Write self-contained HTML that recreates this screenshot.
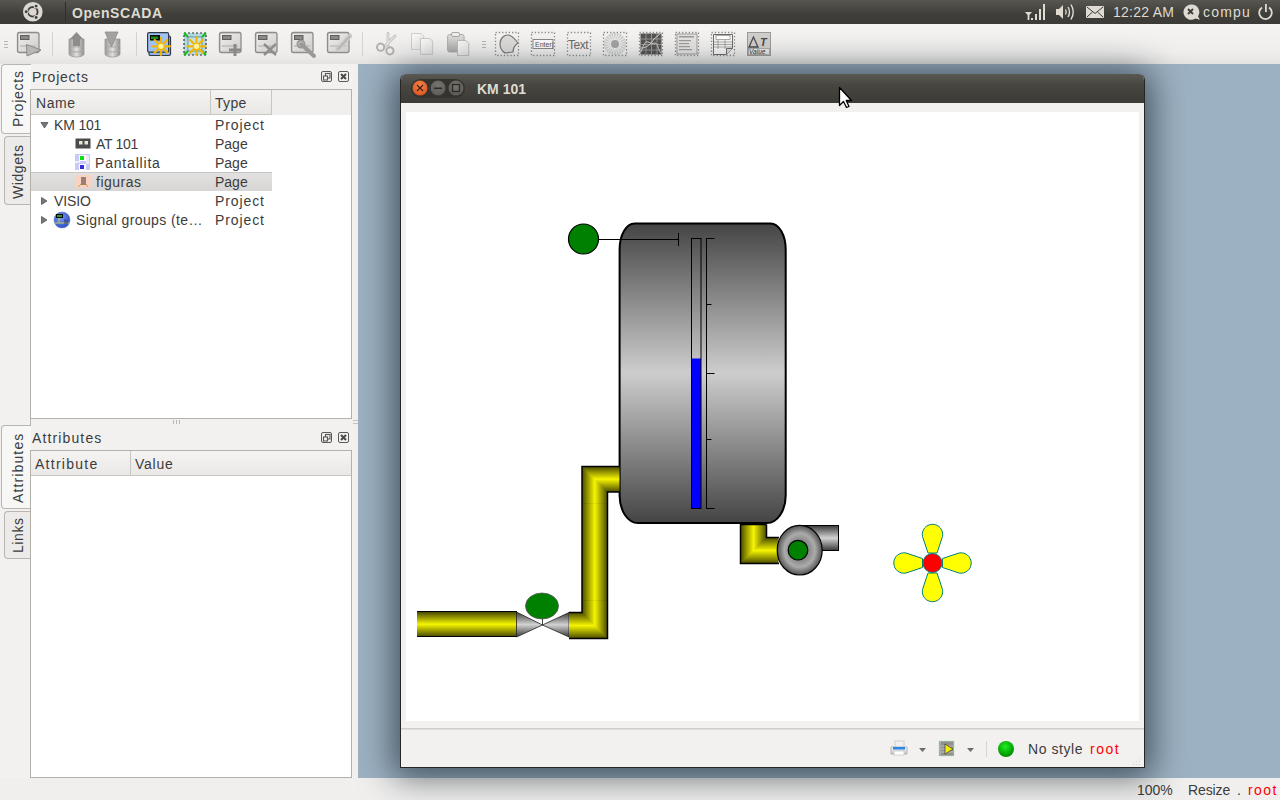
<!DOCTYPE html>
<html><head><meta charset="utf-8">
<style>
*{margin:0;padding:0;box-sizing:border-box}
html,body{width:1280px;height:800px;overflow:hidden;background:#f2f1f0;font-family:"Liberation Sans",sans-serif;font-size:14px;color:#3c3c3c}
.a{position:absolute}
#panel{left:0;top:0;width:1280px;height:24px;background:linear-gradient(#57564f,#3f3e3a 60%,#3c3b37)}
#toolbar{left:0;top:24px;width:1280px;height:40px;background:linear-gradient(#f5f4f3,#efeeed 70%,#e4e3e1)}
#mdi{left:358px;top:64px;width:922px;height:714px;background:#9cb1c2}
#status{left:0;top:778px;width:1280px;height:22px;background:#f0efee}
.tab{background:#ecebea;border:1px solid #b9b6b1;border-right:none;border-radius:4px 0 0 4px}
.tab.sel{background:#f7f7f6}
.vt{position:absolute;transform:rotate(-90deg);transform-origin:0 0;white-space:nowrap;color:#3c3c3c;letter-spacing:0.5px}
.tree{background:#fff;border:1px solid #b4b1ab}
.hdr{background:linear-gradient(#f5f4f3,#e9e8e6);border-bottom:1px solid #c9c6c1}
.t{position:absolute;white-space:nowrap}
</style></head><body>
<div id="panel" class="a">
<svg class="a" style="left:0;top:0" width="1280" height="24">
 <circle cx="32.8" cy="11.8" r="9.8" fill="#dcd8d1"/>
 <circle cx="32.8" cy="11.8" r="4.8" fill="none" stroke="#3f3e3a" stroke-width="1.9"/>
 <circle cx="26.20" cy="11.80" r="2.5" fill="#dcd8d1"/><circle cx="26.20" cy="11.80" r="1.45" fill="#3f3e3a"/>
 <circle cx="36.10" cy="6.08" r="2.5" fill="#dcd8d1"/><circle cx="36.10" cy="6.08" r="1.45" fill="#3f3e3a"/>
 <circle cx="36.10" cy="17.52" r="2.5" fill="#dcd8d1"/><circle cx="36.10" cy="17.52" r="1.45" fill="#3f3e3a"/>
 <rect x="65" y="2" width="1" height="20" fill="#2e2d2a"/>
 <g fill="#dfdbd2">
  <path d="M1025 12h7l-2.6 3v5h-1.8v-5z"/><rect x="1031" y="18" width="2" height="2"/>
  <rect x="1035" y="14" width="2" height="6"/><rect x="1039" y="9" width="2" height="11"/><rect x="1043" y="4" width="2" height="16"/>
  <path d="M1056 9h3l4-4v14l-4-4h-3z"/>
 </g>
 <g fill="none" stroke="#dfdbd2" stroke-width="1.4">
  <path d="M1065.5 9.5q1.5 2.5 0 5"/><path d="M1068 7q3 5 0 10"/><path d="M1071 4.5q4.5 7.5 0 15"/>
 </g>
 <rect x="1086" y="6" width="18" height="12" rx="1" fill="#dfdbd2"/>
 <path d="M1087 7l8 6.5 8-6.5M1087 17l5.5-5M1103 17l-5.5-5" fill="none" stroke="#3c3b37" stroke-width="1"/>
 <path d="M1191 4.6a7.6 7.6 0 1 0 4.5 13.8l4.5 1.4-2-3.4a7.6 7.6 0 0 0-7-11.8z" fill="#dfdbd2"/>
 <path d="M1188 9l5 5M1193 9l-5 5" stroke="#3c3b37" stroke-width="1.8"/>
 <path d="M1262 7.5a6.3 6.3 0 1 0 7 0" fill="none" stroke="#dfdbd2" stroke-width="1.8"/>
 <rect x="1265" y="4" width="1.8" height="8" fill="#dfdbd2"/>
</svg>
<div class="t" style="left:72px;top:4.5px;font-weight:bold;color:#dfdbd2;font-size:14px;letter-spacing:0.57px">OpenSCADA</div>
<div class="t" style="left:1113px;top:4px;color:#dfdbd2;font-size:14px;letter-spacing:0.25px">12:22 AM</div>
<div class="t" style="left:1203px;top:4px;color:#dfdbd2;font-size:14px;letter-spacing:1.19px">compu</div>
</div>
<div id="toolbar" class="a"><svg class="a" style="left:0;top:0" width="1280" height="40" viewBox="0 24 1280 40">
<defs>
 <linearGradient id="scrg" x1="0" y1="0" x2="1" y2="1"><stop offset="0" stop-color="#eeedeb"/><stop offset="1" stop-color="#cfcecc"/></linearGradient>
 <linearGradient id="dbg" x1="0" x2="1"><stop offset="0" stop-color="#9a9997"/><stop offset="0.5" stop-color="#e0dfdd"/><stop offset="1" stop-color="#8f8e8c"/></linearGradient>
 <radialGradient id="star" cx="0.5" cy="0.5" r="0.5"><stop offset="0" stop-color="#fff7a0"/><stop offset="1" stop-color="#f0a800"/></radialGradient>
</defs>
<g fill="#b5b4b2"><rect x="4" y="41" width="4" height="1"/><rect x="4" y="44" width="4" height="1"/><rect x="4" y="47" width="4" height="1"/>
<rect x="482" y="41" width="4" height="1"/><rect x="482" y="44" width="4" height="1"/><rect x="482" y="47" width="4" height="1"/></g>
<rect x="52" y="32" width="1" height="24" fill="#d3d2d0"/>
<rect x="136" y="32" width="1" height="24" fill="#d3d2d0"/>
<rect x="362" y="32" width="1" height="24" fill="#d3d2d0"/>
<g transform="translate(17,32)">
 <rect x="0.5" y="0.5" width="21.5" height="20" rx="2" fill="#d9d8d6" stroke="#8e8d8b" stroke-width="1.3"/>
 <rect x="2" y="2" width="19" height="17" fill="url(#scrg)"/>
 <rect x="3" y="3" width="9.5" height="5" fill="#5e5d5b"/>
 <rect x="4" y="4" width="7.5" height="3" fill="#8a8988"/>
 <path d="M3 14h16" stroke="#bdbcba" stroke-width="1.5"/>
</g>
<path d="M26.5 44.5L41 50L27 56z" fill="#b8b7b5" stroke="#8a8988" stroke-width="1"/>
<!-- db up -->
<g transform="translate(68,32)">
 <path d="M1 7v15a7.5 3 0 0 0 15 0v-15z" fill="url(#dbg)" stroke="#9a9997" stroke-width="0.8"/>
 <path d="M1 12a7.5 3 0 0 0 15 0M1 17a7.5 3 0 0 0 15 0" fill="none" stroke="#a8a7a5" stroke-width="1"/>
 <path d="M8.5 0L15 7h-3v7h-7v-7h-3z" fill="#8e8d8b"/>
</g>
<g transform="translate(104,32)">
 <path d="M1 7v15a7.5 3 0 0 0 15 0v-15z" fill="url(#dbg)" stroke="#9a9997" stroke-width="0.8"/>
 <path d="M1 12a7.5 3 0 0 0 15 0M1 17a7.5 3 0 0 0 15 0" fill="none" stroke="#a8a7a5" stroke-width="1"/>
 <path d="M1 0h13l-6.5 15z" fill="#a3a2a0" stroke="#8e8d8b" stroke-width="0.8"/>
</g>
<!-- new visual item: blue -->
<g transform="translate(147,32)">
 <rect x="2" y="4" width="21.5" height="19.5" rx="1.5" fill="#8fb5ea" stroke="#2f3a48" stroke-width="1.2"/>
 <rect x="0.6" y="0.6" width="21" height="19.6" rx="1.5" fill="#9ec2f4" stroke="#2f3a48" stroke-width="1.2"/>
 <rect x="3" y="3" width="10" height="5.5" fill="#061006"/>
 <rect x="4" y="4.5" width="7" height="2.5" fill="#1c8f1c"/>
 <g stroke="#f2b600" stroke-width="2.2" stroke-linecap="round"><path d="M14 5.5v17.5M5 14.3h18M7.7 8l12.6 12.6M7.7 20.6L20.3 8"/></g>
 <circle cx="14" cy="14.3" r="2.6" fill="#fff4a0"/>
</g>
<g transform="translate(183,32)">
 <rect x="1" y="1" width="22" height="22" fill="#b3d8de" stroke="#303030" stroke-width="1.2" stroke-dasharray="2 2"/>
 <path d="M1 1l4 4M23 1l-4 4M1 23l4-4M23 23l-4-4" stroke="#10c010" stroke-width="2"/>
 <rect x="5" y="5" width="14" height="14" fill="#c5e4e8" stroke="#587f86" stroke-width="0.8"/>
 <g stroke="#f2b600" stroke-width="2.2" stroke-linecap="round"><path d="M13.5 5.5v17.5M4.5 14.3h18M7.2 8l12.6 12.6M7.2 20.6L19.8 8"/></g>
 <circle cx="13.5" cy="14.3" r="2.6" fill="#fff4a0"/>
</g>
<g transform="translate(219,32)">
 <rect x="0.5" y="0.5" width="21.5" height="20" rx="2" fill="#d9d8d6" stroke="#8e8d8b" stroke-width="1.3"/>
 <rect x="2" y="2" width="19" height="17" fill="url(#scrg)"/>
 <rect x="3" y="3" width="9.5" height="5" fill="#5e5d5b"/>
 <rect x="4" y="4" width="7.5" height="3" fill="#8a8988"/>
 <path d="M3 14h16" stroke="#bdbcba" stroke-width="1.5"/>
</g>
<path d="M235 44v12M229 50h12" stroke="#8a8988" stroke-width="3"/>
<g transform="translate(255,32)">
 <rect x="0.5" y="0.5" width="21.5" height="20" rx="2" fill="#d9d8d6" stroke="#8e8d8b" stroke-width="1.3"/>
 <rect x="2" y="2" width="19" height="17" fill="url(#scrg)"/>
 <rect x="3" y="3" width="9.5" height="5" fill="#5e5d5b"/>
 <rect x="4" y="4" width="7.5" height="3" fill="#8a8988"/>
 <path d="M3 14h16" stroke="#bdbcba" stroke-width="1.5"/>
</g>
<path d="M264 55l12-11M264 44l12 11" stroke="#8e8d8b" stroke-width="2.4"/>
<g transform="translate(291,32)">
 <rect x="0.5" y="0.5" width="21.5" height="20" rx="2" fill="#d9d8d6" stroke="#8e8d8b" stroke-width="1.3"/>
 <rect x="2" y="2" width="19" height="17" fill="url(#scrg)"/>
 <rect x="3" y="3" width="9.5" height="5" fill="#5e5d5b"/>
 <rect x="4" y="4" width="7.5" height="3" fill="#8a8988"/>
 <path d="M3 14h16" stroke="#bdbcba" stroke-width="1.5"/>
</g>
<path d="M301 44l13 12" stroke="#999896" stroke-width="4" stroke-linecap="round"/>
<circle cx="301" cy="44" r="3.5" fill="none" stroke="#999896" stroke-width="2"/>
<g transform="translate(327,32)">
 <rect x="0.5" y="0.5" width="21.5" height="20" rx="2" fill="#d9d8d6" stroke="#8e8d8b" stroke-width="1.3"/>
 <rect x="2" y="2" width="19" height="17" fill="url(#scrg)"/>
 <rect x="3" y="3" width="9.5" height="5" fill="#5e5d5b"/>
 <rect x="4" y="4" width="7.5" height="3" fill="#8a8988"/>
 <path d="M3 14h16" stroke="#bdbcba" stroke-width="1.5"/>
</g>
<path d="M338 49l12-13" stroke="#c8c7c5" stroke-width="4.5" stroke-linecap="round"/>
<path d="M338 49l12-13" stroke="#a3a2a0" stroke-width="1" />
<!-- scissors -->
<defs><linearGradient id="pg" x1="0" y1="0" x2="1" y2="1"><stop offset="0" stop-color="#fbfbfa"/><stop offset="1" stop-color="#e2e1df"/></linearGradient>
<linearGradient id="clipg" x1="0" y1="0" x2="0" y2="1"><stop offset="0" stop-color="#e2e1df"/><stop offset="1" stop-color="#a9a8a6"/></linearGradient></defs>
<g fill="none" stroke-linecap="round">
 <path d="M388 33.5V45M395 36L385.5 45.5" stroke="#b3b2b0" stroke-width="2.6"/>
 <path d="M388 33.5V45M395 36L385.5 45.5" stroke="#ededec" stroke-width="1.2"/>
 <circle cx="380.6" cy="47.2" r="3.6" stroke="#b3b2b0" stroke-width="2"/>
 <circle cx="389.9" cy="50.8" r="3.6" stroke="#b3b2b0" stroke-width="2"/>
</g>
<!-- copy -->
<path d="M411.5 33.5h9.5l2.7 2.7v13.3h-12.2z" fill="url(#pg)" stroke="#cfcecc" stroke-width="1"/>
<path d="M420.5 38.5h9.5l2.6 2.6v13.3h-12.1z" fill="url(#pg)" stroke="#cac9c7" stroke-width="1"/>
<!-- paste -->
<rect x="447.6" y="34.5" width="16.5" height="17.5" rx="2" fill="url(#clipg)" stroke="#aeadab" stroke-width="1"/>
<rect x="451.5" y="32.5" width="8" height="4" rx="1.5" fill="#eeeeed" stroke="#a8a7a5" stroke-width="1"/>
<path d="M457.5 40.5h8.5l2.8 2.8v12.3h-11.3z" fill="url(#pg)" stroke="#bdbcba" stroke-width="1"/>
<rect x="495.5" y="32.5" width="23" height="23" fill="none" stroke="#8a8988" stroke-width="1.3" stroke-dasharray="1.3 2"/><path d="M500 44c0-6 4-9 8-9 3 0 7 4 10 8-3 2-5 4-5 9-3 0-5 1-8 1-3-2-5-5-5-9z" fill="#dcdbd9" stroke="#777674" stroke-width="1.2"/><rect x="531.5" y="32.5" width="23" height="23" fill="none" stroke="#8a8988" stroke-width="1.3" stroke-dasharray="1.3 2"/><rect x="533" y="39.5" width="20" height="9" fill="#fafafa" stroke="#8a8988" stroke-width="1"/><text x="535" y="47" font-family="Liberation Sans" font-size="7" fill="#555">Enter|</text><rect x="567.5" y="32.5" width="23" height="23" fill="none" stroke="#8a8988" stroke-width="1.3" stroke-dasharray="1.3 2"/><text x="568" y="49" font-family="Liberation Sans" font-size="12" fill="#6c6b69" letter-spacing="-0.5">Text</text><rect x="603.5" y="32.5" width="23" height="23" fill="none" stroke="#8a8988" stroke-width="1.3" stroke-dasharray="1.3 2"/><g transform="translate(615,44)"><circle r="11" fill="#c9c9c8"/><g stroke="#eeeeed" stroke-width="1.1"><path d="M0 0L10.50 0.00" /><path d="M0 0L10.07 2.96" /><path d="M0 0L8.83 5.68" /><path d="M0 0L6.88 7.94" /><path d="M0 0L4.36 9.55" /><path d="M0 0L1.49 10.39" /><path d="M0 0L-1.49 10.39" /><path d="M0 0L-4.36 9.55" /><path d="M0 0L-6.88 7.94" /><path d="M0 0L-8.83 5.68" /><path d="M0 0L-10.07 2.96" /><path d="M0 0L-10.50 0.00" /><path d="M0 0L-10.07 -2.96" /><path d="M0 0L-8.83 -5.68" /><path d="M0 0L-6.88 -7.94" /><path d="M0 0L-4.36 -9.55" /><path d="M0 0L-1.49 -10.39" /><path d="M0 0L1.49 -10.39" /><path d="M0 0L4.36 -9.55" /><path d="M0 0L6.88 -7.94" /><path d="M0 0L8.83 -5.68" /><path d="M0 0L10.07 -2.96" /></g><circle r="4" fill="#a3a3a2"/></g><rect x="639.5" y="32.5" width="23" height="23" fill="none" stroke="#8a8988" stroke-width="1.3" stroke-dasharray="1.3 2"/><rect x="640.5" y="33.5" width="21" height="21" fill="#555452"/><g stroke="#9a9997" stroke-width="0.9"><path d="M641 39h21M641 44.5h21M641 50h21M646 33v22M651.5 33v22M657 33v22"/></g><path d="M641 52c3-8 4-11 7-10 3 1 4 2 7 1 3 0 3 7 6 10M641 48c6 0 10-4 13-9l7-6" fill="none" stroke="#d0cfcd" stroke-width="1"/><rect x="675.5" y="32.5" width="23" height="23" fill="none" stroke="#8a8988" stroke-width="1.3" stroke-dasharray="1.3 2"/><rect x="677" y="34" width="20" height="20" fill="#e4e3e1" stroke="#8a8988" stroke-width="0.8"/><g fill="#9c9b99"><rect x="679" y="36" width="15" height="1.5"/><rect x="679" y="40" width="12" height="1.2"/><rect x="679" y="43" width="10" height="1.2"/><rect x="679" y="46" width="11" height="1.2"/><rect x="679" y="49" width="13" height="1.2"/></g><rect x="711.5" y="32.5" width="23" height="23" fill="none" stroke="#8a8988" stroke-width="1.3" stroke-dasharray="1.3 2"/><path d="M713.5 34.5h19v14l-6 6h-13z" fill="#f6f6f5" stroke="#6e6d6b" stroke-width="1"/><rect x="716" y="35.5" width="14" height="4" fill="#fff" stroke="#8a8988" stroke-width="0.7"/><g stroke="#8a8988" stroke-width="0.7"><path d="M714 42h18M714 44.5h18M714 47h18M718 40v9M725 40v9"/></g><path d="M726.5 54.5v-6h6" fill="#dcdbd9" stroke="#6e6d6b" stroke-width="1"/><g transform="translate(747,32)"><rect x="0.5" y="0.5" width="23" height="23" fill="#d0cfcd" stroke="#9c9b99" stroke-width="1"/><path d="M2 15L6.5 5L11 15z" fill="none" stroke="#4c4b49" stroke-width="1.3"/><text x="13" y="14" font-family="Liberation Sans" font-size="11" font-weight="bold" font-style="italic" fill="#4c4b49">T</text><rect x="1.5" y="16.5" width="21" height="6" fill="#e9e8e6" stroke="#8a8988" stroke-width="0.6"/><text x="2" y="22" font-family="Liberation Sans" font-size="6.5" font-style="italic" fill="#333">Value</text></g></svg></div>
<div id="mdi" class="a"></div>
<div id="status" class="a"></div>

<!-- left tabs -->
<div class="a tab sel" style="left:1px;top:64px;width:30px;height:70px"></div>
<div class="a tab" style="left:4px;top:136px;width:27px;height:69px"></div>
<div class="a tab sel" style="left:1px;top:425px;width:30px;height:84px"></div>
<div class="a tab" style="left:4px;top:511px;width:27px;height:48px"></div>
<div class="a" style="left:30px;top:134px;width:1px;height:291px;background:#b9b6b1"></div>
<div class="a" style="left:30px;top:509px;width:1px;height:269px;background:#b9b6b1"></div>
<div class="vt" style="left:9.5px;top:127px;letter-spacing:0.78px">Projects</div>
<div class="vt" style="left:9.5px;top:199px;letter-spacing:0.57px">Widgets</div>
<div class="vt" style="left:9.5px;top:503px;letter-spacing:1.13px">Attributes</div>
<div class="vt" style="left:9.5px;top:553px;letter-spacing:0.58px">Links</div>

<div class="t" style="left:32px;top:69px;letter-spacing:0.78px">Projects</div>
<svg class="a" style="left:320px;top:70px" width="32" height="14">
 <rect x="1.5" y="1.5" width="10" height="10" rx="1.5" fill="none" stroke="#5a5956" stroke-width="1"/>
 <rect x="5.5" y="3.5" width="4.5" height="4.5" fill="none" stroke="#5a5956" stroke-width="1.1"/>
 <rect x="3.5" y="6" width="4" height="4" fill="#f2f1f0" stroke="#5a5956" stroke-width="1.1"/>
 <rect x="18.5" y="1.5" width="10" height="10" rx="1.5" fill="none" stroke="#5a5956" stroke-width="1"/>
 <path d="M21 4l5 5M26 4l-5 5" stroke="#4a4946" stroke-width="2"/>
</svg>
<div class="a tree" style="left:30px;top:89px;width:322px;height:330px">
 <div class="a" style="left:0;top:0;width:320px;height:25px;background:#f0efee"></div>
 <div class="a hdr" style="left:0;top:0;width:180px;height:25px;border-right:1px solid #c9c6c1"></div>
 <div class="a hdr" style="left:180px;top:0;width:61px;height:25px;border-right:1px solid #c9c6c1"></div>
 <div class="t" style="left:5px;top:5px;letter-spacing:0.6px">Name</div>
 <div class="t" style="left:184px;top:5px;letter-spacing:0.3px">Type</div>
 <div class="a" style="left:0;top:82px;width:241px;height:19px;background:linear-gradient(#e2e1df,#d7d6d4);border-top:1px solid #c8c7c5"></div>
 <svg class="a" style="left:0;top:25px" width="60" height="120">
  <path d="M10 7.5h7l-3.5 5.5z" fill="#777" stroke="#555" stroke-width="0.8"/>
  <path d="M10.5 82.5v7l5.5-3.5z" fill="#777" stroke="#555" stroke-width="0.8"/>
  <path d="M10.5 101.5v7l5.5-3.5z" fill="#777" stroke="#555" stroke-width="0.8"/>
 </svg>
 <svg class="a" style="left:40px;top:45px" width="20" height="100">
  <rect x="4.5" y="3.5" width="15" height="10" fill="#4b4b4b"/>
  <rect x="8" y="6" width="3.5" height="3.5" fill="#e8e6d8"/><rect x="13.5" y="6" width="3.5" height="3.5" fill="#e8e6d8"/>
  <rect x="4" y="19" width="15" height="16" fill="#c9c9fb"/>
  <rect x="8" y="20" width="7" height="6" fill="#fff"/><rect x="9" y="21" width="4" height="4" fill="#10e010"/>
  <rect x="8" y="29" width="7" height="6" fill="#fff"/><rect x="9" y="30" width="4" height="4" fill="#3030e0"/>
  <rect x="15" y="20" width="3" height="9" fill="#eaeaf8"/><rect x="4" y="26" width="5" height="2" fill="#eee"/>
  <rect x="5" y="40" width="15" height="13" fill="#f9d2c4"/>
  <rect x="10" y="42" width="5" height="8" fill="#9a8070"/><path d="M7 52l3-3M17 52l-2-3" stroke="#c8a040" stroke-width="1"/>
 </svg>
 <svg class="a" style="left:22px;top:121px" width="18" height="18">
  <defs><radialGradient id="sgb" cx="0.4" cy="0.35" r="0.6"><stop offset="0" stop-color="#7a9ef0"/><stop offset="1" stop-color="#3556c8"/></radialGradient></defs>
  <circle cx="9" cy="9" r="8" fill="url(#sgb)" stroke="#4a6ad0" stroke-width="0.5"/>
  <rect x="3" y="3" width="7" height="4" fill="#050505"/><rect x="4" y="4" width="5" height="2" fill="#20a020"/>
  <path d="M6 7v4M1.5 12h15" stroke="#c8d060" stroke-width="1"/><path d="M12 8v5M14 9v4" stroke="#202040" stroke-width="0.7"/>
 </svg>
 <div class="t" style="left:23px;top:26px;line-height:19px;letter-spacing:-0.17px">KM 101</div>
 <div class="t" style="left:65px;top:45px;line-height:19px;letter-spacing:-0.32px">AT 101</div>
 <div class="t" style="left:64px;top:64px;line-height:19px;letter-spacing:0.81px">Pantallita</div>
 <div class="t" style="left:65px;top:83px;line-height:19px;letter-spacing:0.5px">figuras</div>
 <div class="t" style="left:23px;top:102px;line-height:19px;letter-spacing:-0.1px">VISIO</div>
 <div class="t" style="left:45px;top:121px;line-height:19px;letter-spacing:0.39px">Signal groups (te…</div>
 <div class="t" style="left:184px;top:26px;line-height:19px;letter-spacing:0.89px">Project</div>
 <div class="t" style="left:184px;top:45px;line-height:19px">Page</div>
 <div class="t" style="left:184px;top:64px;line-height:19px">Page</div>
 <div class="t" style="left:184px;top:83px;line-height:19px">Page</div>
 <div class="t" style="left:184px;top:102px;line-height:19px;letter-spacing:0.89px">Project</div>
 <div class="t" style="left:184px;top:121px;line-height:19px;letter-spacing:0.89px">Project</div>
</div>
<svg class="a" style="left:172px;top:419px" width="10" height="7"><path d="M1.5 1v4M4.5 1v4M7.5 1v4" stroke="#b9b8b6" stroke-width="1"/></svg>
<svg class="a" style="left:352px;top:419px" width="6" height="7"><path d="M1 1.5h5M1 4.5h5" stroke="#c4c3c1" stroke-width="1"/></svg>

<div class="t" style="left:32px;top:430px;letter-spacing:1.13px">Attributes</div>
<svg class="a" style="left:320px;top:431px" width="32" height="14">
 <rect x="1.5" y="1.5" width="10" height="10" rx="1.5" fill="none" stroke="#5a5956" stroke-width="1"/>
 <rect x="5.5" y="3.5" width="4.5" height="4.5" fill="none" stroke="#5a5956" stroke-width="1.1"/>
 <rect x="3.5" y="6" width="4" height="4" fill="#f2f1f0" stroke="#5a5956" stroke-width="1.1"/>
 <rect x="18.5" y="1.5" width="10" height="10" rx="1.5" fill="none" stroke="#5a5956" stroke-width="1"/>
 <path d="M21 4l5 5M26 4l-5 5" stroke="#4a4946" stroke-width="2"/>
</svg>
<div class="a tree" style="left:30px;top:450px;width:322px;height:328px">
 <div class="a hdr" style="left:0;top:0;width:100px;height:25px;border-right:1px solid #c9c6c1"></div>
 <div class="a hdr" style="left:100px;top:0;width:220px;height:25px"></div>
 <div class="t" style="left:4px;top:5px;letter-spacing:1.27px">Attribute</div>
 <div class="t" style="left:104px;top:5px;letter-spacing:0.73px">Value</div>
</div>

<!-- window -->
<div class="a" style="left:400px;top:74px;width:745px;height:694px;box-shadow:0 3px 34px 6px rgba(10,20,30,0.64);border-radius:7px 7px 0 0;z-index:5"></div>
<div class="a" style="left:400px;top:74px;width:745px;height:694px;background:#f2f1f0;border:1px solid #262624;border-top:none;border-radius:6px 6px 0 0;overflow:hidden;z-index:6">
  <div class="a" style="left:0;top:0;width:745px;height:29px;background:linear-gradient(#5a5853,#46453f 40%,#3c3b37)"></div>
  <div class="a" style="left:10px;top:5px;width:54px;height:19px;border-radius:10px;background:#34332f"></div>
  <svg class="a" style="left:0;top:0" width="100" height="29">
   <defs>
    <radialGradient id="clsg" cx="0.5" cy="0.35" r="0.7"><stop offset="0" stop-color="#f7834a"/><stop offset="1" stop-color="#d9531c"/></radialGradient>
    <radialGradient id="btng" cx="0.5" cy="0.35" r="0.7"><stop offset="0" stop-color="#77766f"/><stop offset="1" stop-color="#5a5954"/></radialGradient>
   </defs>
   <circle cx="19" cy="14" r="7.5" fill="url(#clsg)"/>
   <path d="M16 11l6 6M22 11l-6 6" stroke="#3b2012" stroke-width="1.2"/>
   <circle cx="37" cy="14" r="7.5" fill="url(#btng)"/>
   <rect x="33" y="13.5" width="8" height="1.6" fill="#2e2d2a"/>
   <circle cx="55" cy="14" r="7.5" fill="url(#btng)"/>
   <rect x="51.5" y="10.5" width="7" height="7" fill="none" stroke="#2e2d2a" stroke-width="1.4"/>
  </svg>
  <div class="t" style="left:76px;top:7px;font-weight:bold;color:#dfdbd2;font-size:14px">KM 101</div>
  <div class="a" style="left:5px;top:38px;width:733px;height:609px;background:#fff"></div>
  <div class="a" style="left:0;top:654px;width:743px;height:2px;background:linear-gradient(#c8c6c2,#e8e7e5)"></div>
  <svg class="a" style="left:488px;top:664px" width="100" height="20">
   <defs><linearGradient id="prn" x1="0" y1="0" x2="0" y2="1"><stop offset="0" stop-color="#f8f8f8"/><stop offset="1" stop-color="#c8c8c8"/></linearGradient></defs>
   <rect x="6" y="3" width="9" height="8" fill="#f0f0f0" stroke="#c9c9c9" stroke-width="0.8"/>
   <path d="M2 9h16v7h-16z" fill="url(#prn)" stroke="#a9a9a9" stroke-width="0.8"/>
   <rect x="4" y="9" width="12" height="2.5" fill="#2a8be6"/>
   <rect x="5" y="13" width="10" height="4" fill="#fff" stroke="#bbb" stroke-width="0.6"/>
   <path d="M30 10h7l-3.5 4z" fill="#6c6c6c"/>
   <rect x="50" y="3" width="15" height="15" fill="#a9a9a9" stroke="#60e060" stroke-width="0.6" stroke-dasharray="1 1.5"/>
   <rect x="52" y="4" width="12" height="13" fill="#909090"/>
   <path d="M52 8h12M52 11h12M52 14h12" stroke="#c8c8c8" stroke-width="0.8"/>
   <path d="M56 6v10l8-5z" fill="#f0f000" stroke="#202020" stroke-width="0.6"/>
   <path d="M78 10h7l-3.5 4z" fill="#6c6c6c"/>
   <rect x="97" y="3" width="1" height="16" fill="#d6d5d3"/>
  </svg>
  <svg class="a" style="left:596px;top:666px" width="20" height="20">
   <defs><radialGradient id="grn" cx="0.45" cy="0.35" r="0.6"><stop offset="0" stop-color="#20f020"/><stop offset="1" stop-color="#009000"/></radialGradient></defs>
   <circle cx="9" cy="9" r="8" fill="url(#grn)"/>
  </svg>
  <div class="t" style="left:627px;top:667px;color:#3c3c3c;letter-spacing:0.56px">No style</div>
  <div class="t" style="left:689px;top:667px;color:#ff0000;letter-spacing:1.5px">root</div>
  <svg class="a" style="left:730px;top:683px" width="12" height="10"><g fill="#d0cfcd"><rect x="8" y="1" width="1" height="1"/><rect x="5" y="4" width="1" height="1"/><rect x="8" y="4" width="1" height="1"/><rect x="2" y="7" width="1" height="1"/><rect x="5" y="7" width="1" height="1"/><rect x="8" y="7" width="1" height="1"/></g></svg>
</div>

<!-- diagram -->
<svg class="a" style="left:400px;top:103px;z-index:7" width="745" height="620" viewBox="400 103 745 620">
 <defs>
  <linearGradient id="tank" x1="0" y1="223" x2="0" y2="523" gradientUnits="userSpaceOnUse">
   <stop offset="0" stop-color="#444"/><stop offset="0.5" stop-color="#cdcdcd"/><stop offset="1" stop-color="#444"/>
  </linearGradient>
  <linearGradient id="yv" x1="0" x2="1"><stop offset="0" stop-color="#4a4a00"/><stop offset="0.5" stop-color="#f5f500"/><stop offset="1" stop-color="#4a4a00"/></linearGradient>
  <linearGradient id="yh" x1="0" x2="0" y1="0" y2="1"><stop offset="0" stop-color="#4a4a00"/><stop offset="0.5" stop-color="#f5f500"/><stop offset="1" stop-color="#4a4a00"/></linearGradient>
  <linearGradient id="gh" x1="0" x2="0" y1="0" y2="1"><stop offset="0" stop-color="#3a3a3a"/><stop offset="0.5" stop-color="#d2d2d2"/><stop offset="1" stop-color="#3a3a3a"/></linearGradient>
  <radialGradient id="pump" cx="0.5" cy="0.5" r="0.5"><stop offset="0" stop-color="#686868"/><stop offset="0.4" stop-color="#888"/><stop offset="0.68" stop-color="#ababab"/><stop offset="1" stop-color="#525252"/></radialGradient>
 </defs>
 <!-- tank -->
 <path d="M634.5 223.5H770.5A15.2 26 0 0 1 785.7 249.5V495.5A18.7 27.5 0 0 1 767 523H638A18.4 27.5 0 0 1 619.6 495.5V249.5A14.9 26 0 0 1 634.5 223.5Z" fill="url(#tank)" stroke="#000" stroke-width="2"/>
 <path d="M599 239.5H678.5M678.5 233v13" stroke="#000" stroke-width="1"/>
 <circle cx="583.5" cy="239" r="15" fill="#008000" stroke="#000" stroke-width="1.2"/>
 <rect x="691.5" y="358.5" width="9.5" height="150" fill="#0000ff"/>
 <rect x="691.5" y="238.5" width="9.5" height="270" fill="none" stroke="#000" stroke-width="1"/>
 <path d="M706.5 238v271M706 238.5h8.5M706 304.5h5.5M706 373.5h8.5M706 439.5h5.5M706 508.5h8.5" stroke="#000" stroke-width="1" fill="none"/>
 <!-- left pipe -->
 <rect x="417" y="612" width="100" height="24.5" fill="url(#yh)"/>
 <path d="M417 611.5H517M417 636.5H517" stroke="#000" stroke-width="1"/>
 <!-- valve -->
 <path d="M516.5 612L542.5 625L516.5 637Z" fill="url(#gh)" stroke="#222" stroke-width="0.8"/>
 <path d="M569 612.5L542.5 625L569 637Z" fill="url(#gh)" stroke="#222" stroke-width="0.8"/>
 <path d="M542.5 619v6" stroke="#444" stroke-width="1"/>
 <ellipse cx="542" cy="606" rx="16.5" ry="13" fill="#008000" stroke="#555" stroke-width="0.8"/>
 <!-- L pipe -->
 <rect x="582" y="466.5" width="25.5" height="172" fill="url(#yv)"/>
 <path d="M582 466.5H619.5V492H607.5Z" fill="url(#yh)"/>
 <path d="M569 612.5H581.5L607.5 638.5H569Z" fill="url(#yh)"/>
 <path d="M569 612.5H582V466.5H619.5M619.5 492H607.5V638.5H569" fill="none" stroke="#000" stroke-width="1.5"/>
 <path d="M569 638.5H608" stroke="#000" stroke-width="1"/>
 <path d="M582 600.5H607.5M582 503.5H607.5" stroke="#000" stroke-width="1" opacity="0.06"/>
 <!-- pump L -->
 <rect x="740.5" y="525" width="26" height="38.5" fill="url(#yv)"/>
 <path d="M740.5 563.5L766.5 537.5H778.5V563.5Z" fill="url(#yh)"/>
 <path d="M766.5 524.5V537.5H779M779 563.5H740.5V524.5H766.5" fill="none" stroke="#000" stroke-width="1.5"/>
 <!-- pump -->
 <rect x="800" y="525.5" width="38.5" height="25" fill="url(#gh)" stroke="#000" stroke-width="1"/>
 <ellipse cx="799.7" cy="550.2" rx="22.5" ry="24.8" fill="url(#pump)" stroke="#000" stroke-width="1.2"/>
 <circle cx="798" cy="550.2" r="9.8" fill="#008000" stroke="#000" stroke-width="1.2"/>
 <!-- fan -->
 <path transform="rotate(0 932.5 563)" d="M928 553 L922.5 536.5 A10.2 10.2 0 1 1 942.5 536.5 L937 553 Z" fill="#ffff00" stroke="#008080" stroke-width="1"/><path transform="rotate(90 932.5 563)" d="M928 553 L922.5 536.5 A10.2 10.2 0 1 1 942.5 536.5 L937 553 Z" fill="#ffff00" stroke="#008080" stroke-width="1"/><path transform="rotate(180 932.5 563)" d="M928 553 L922.5 536.5 A10.2 10.2 0 1 1 942.5 536.5 L937 553 Z" fill="#ffff00" stroke="#008080" stroke-width="1"/><path transform="rotate(270 932.5 563)" d="M928 553 L922.5 536.5 A10.2 10.2 0 1 1 942.5 536.5 L937 553 Z" fill="#ffff00" stroke="#008080" stroke-width="1"/>
 <circle cx="932.5" cy="563" r="9.5" fill="#ff0000" stroke="#008080" stroke-width="1"/>
</svg>
<!-- cursor -->
<svg class="a" style="left:836px;top:85px;z-index:9" width="18" height="25"><path d="M3.5 2.5V20.5L7.5 16.5L10.5 22.5L13 21.5L10.2 15.5H15.5Z" fill="#fff" stroke="#000" stroke-width="1.3" stroke-linejoin="round"/></svg>

<!-- statusbar text -->
<div class="t" style="left:1137px;top:782px">100%</div>
<div class="t" style="left:1188px;top:782px;letter-spacing:-0.12px">Resize</div>
<div class="t" style="left:1237px;top:782px">.</div>
<div class="t" style="left:1248px;top:782px;color:#ff0000;letter-spacing:1.46px">root</div>
</body></html>
